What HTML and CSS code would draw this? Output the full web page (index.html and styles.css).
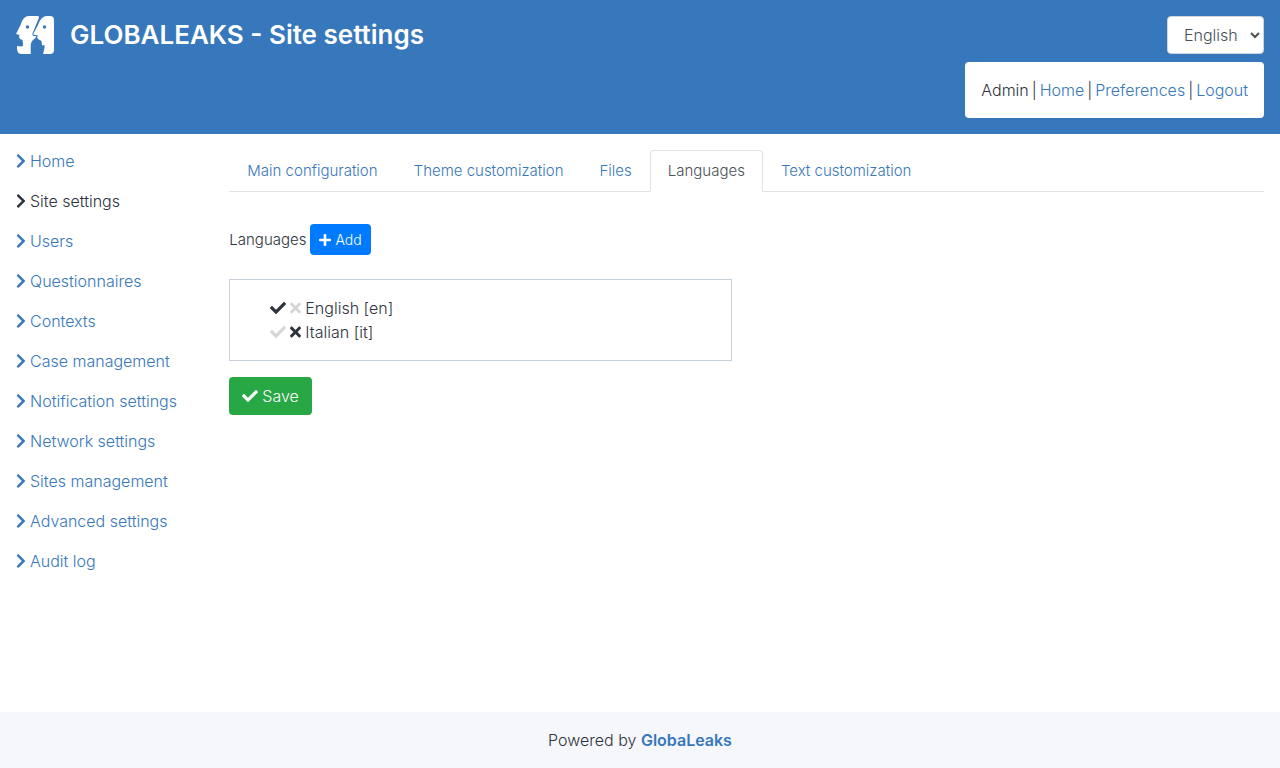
FILE: index.html
```
<!DOCTYPE html>
<html lang="en">
<head>
<meta charset="utf-8">
<title>GLOBALEAKS - Site settings</title>
<link rel="stylesheet" href="styles.css">
</head>
<body>
<svg class="sprite" aria-hidden="true">
  <symbol id="chevron" viewBox="0 0 320 512"><path d="M285.500 273 91.100 467.300c-9.400 9.400-24.600 9.400-33.900 0l-22.700-22.700c-9.400-9.400-9.400-24.500 0-33.900L188.500 256 34.500 101.300c-9.300-9.400-9.300-24.500 0-33.900l22.700-22.700c9.400-9.400 24.600-9.400 33.900 0L285.500 239c9.400 9.400 9.400 24.600 0 34z"/></symbol>
  <symbol id="check" viewBox="0 0 512 512"><path d="M173.900 439.400 7.500 273c-10-10-10-26.200 0-36.200l36.200-36.200c10-10 26.200-10 36.200 0L192 312.700 432.100 72.600c10-10 26.200-10 36.200 0l36.200 36.200c10 10 10 26.200 0 36.200L210.100 439.400c-10 10-26.200 10-36.200 0z"/></symbol>
  <symbol id="times" viewBox="0 0 352 512"><path d="M242.700 256l100.100-100.100c12.300-12.300 12.300-32.200 0-44.500l-22.200-22.200c-12.300-12.300-32.200-12.300-44.500 0L176 189.300 75.900 89.200c-12.300-12.300-32.200-12.300-44.500 0L9.200 111.500c-12.300 12.300-12.300 32.200 0 44.500L109.300 256 9.200 356.100c-12.300 12.300-12.300 32.200 0 44.500l22.200 22.200c12.300 12.300 32.200 12.300 44.500 0L176 322.700l100.100 100.100c12.300 12.300 32.200 12.300 44.500 0l22.200-22.200c12.300-12.300 12.300-32.200 0-44.500L242.700 256z"/></symbol>
  <symbol id="plus" viewBox="0 0 448 512"><path d="M416 208H272V64c0-17.700-14.300-32-32-32h-32c-17.700 0-32 14.300-32 32v144H32c-17.700 0-32 14.300-32 32v32c0 17.700 14.300 32 32 32h144v144c0 17.700 14.300 32 32 32h32c17.700 0 32-14.300 32-32V304h144c17.700 0 32-14.300 32-32v-32c0-17.700-14.300-32-32-32z"/></symbol>
</svg>

<header class="header">
  <div class="brand">
    <svg class="logo" viewBox="0 0 38 38" aria-hidden="true">
      <path class="logo-shape" d="M13 0H21.500Q23.600 0 22.800 2L16.500 17.500Q16 19.500 17.500 20H20L19.500 22L17 24Q14.700 26 14.700 29V38H6Q1 38 1 32.500V30L5.500 30.500Q7.500 30 7 27.500L6.500 24L4 23L3 21L3.500 19L0 18L4.500 9Q7 0 13 0Z"/>
      <path class="logo-shape" d="M31 0H34Q38 0 38 4V34Q38 38 34 38H27L28.500 32V29L26 29.500L25.500 25L22 23L21 21L22 19.500L17 18.500L22 9Q25 0 31 0Z"/>
      <circle class="logo-eye" cx="11.500" cy="11" r="1.700"/>
      <circle class="logo-eye" cx="28.500" cy="11" r="1.700"/>
    </svg>
    <h1 class="title">GLOBALEAKS - Site settings</h1>
  </div>
  <div class="session">
    <select class="language" aria-label="Language"><option>English</option></select>
    <div class="account">
      <span>Admin</span><span>|</span><a href="#">Home</a><span>|</span><a href="#">Preferences</a><span>|</span><a href="#">Logout</a>
    </div>
  </div>
</header>

<div class="content">
  <nav class="sidebar" aria-label="Administration">
    <a href="#"><svg class="icon chevron"><use href="#chevron"/></svg> Home</a>
    <a href="#" class="current" aria-current="page"><svg class="icon chevron"><use href="#chevron"/></svg> Site settings</a>
    <a href="#"><svg class="icon chevron"><use href="#chevron"/></svg> Users</a>
    <a href="#"><svg class="icon chevron"><use href="#chevron"/></svg> Questionnaires</a>
    <a href="#"><svg class="icon chevron"><use href="#chevron"/></svg> Contexts</a>
    <a href="#"><svg class="icon chevron"><use href="#chevron"/></svg> Case management</a>
    <a href="#"><svg class="icon chevron"><use href="#chevron"/></svg> Notification settings</a>
    <a href="#"><svg class="icon chevron"><use href="#chevron"/></svg> Network settings</a>
    <a href="#"><svg class="icon chevron"><use href="#chevron"/></svg> Sites management</a>
    <a href="#"><svg class="icon chevron"><use href="#chevron"/></svg> Advanced settings</a>
    <a href="#"><svg class="icon chevron"><use href="#chevron"/></svg> Audit log</a>
  </nav>
  <main class="main">
    <nav class="tabs" aria-label="Site settings">
      <a href="#">Main configuration</a>
      <a href="#">Theme customization</a>
      <a href="#">Files</a>
      <a href="#" class="active" aria-current="page">Languages</a>
      <a href="#">Text customization</a>
    </nav>
    <div class="add-row">
      <span>Languages</span>
      <button type="button" class="button add"><svg class="icon plus"><use href="#plus"/></svg> Add</button>
    </div>
    <ul class="languages">
      <li><svg class="icon check"><use href="#check"/></svg><svg class="icon times muted"><use href="#times"/></svg>English [en]</li>
      <li><svg class="icon check muted"><use href="#check"/></svg><svg class="icon times"><use href="#times"/></svg>Italian [it]</li>
    </ul>
    <button type="button" class="button save"><svg class="icon check"><use href="#check"/></svg> Save</button>
  </main>
</div>

<footer class="footer">Powered by&nbsp;<a href="#">GlobaLeaks</a></footer>
</body>
</html>
```

FILE: styles.css
```
* { box-sizing: border-box; }

body {
  margin: 0;
  min-height: 100vh;
  display: flex;
  flex-direction: column;
  background: #fff;
  color: #2d323d;
  font: 300 16px/24px Metropolis, Inter, sans-serif;
}

a { color: #3777bc; text-decoration: none; }

.sprite { display: none; }
.icon { height: 16px; fill: currentColor; flex: none; }
.chevron { width: 10px; }
.check { width: 16px; }
.times { width: 11px; }
.plus { width: 12px; height: 14px; }
.muted { color: #d5d6d8; }

.header {
  display: flex;
  justify-content: space-between;
  align-items: flex-start;
  padding: 16px;
  background: #3777bc;
}
.brand { display: flex; align-items: center; gap: 16px; }
.logo { width: 38px; height: 38px; }
.logo-shape { fill: #fff; }
.logo-eye { fill: #3777bc; }
.title { margin: 0; color: #fff; font-size: 26px; line-height: 38px; font-weight: 600; }

.session { display: flex; flex-direction: column; align-items: flex-end; gap: 8px; }
.language {
  height: 38px;
  padding: 6px 9px 6px 12px;
  border: 1px solid #ced4da;
  border-radius: 4px;
  background: #fff;
  color: #495057;
  font: inherit;
}
.account { display: flex; gap: 3px; padding: 16px; border-radius: 4px; background: #fff; }

.content { flex: 1; display: grid; grid-template-columns: 1fr 5fr; }
.sidebar { display: flex; flex-direction: column; padding: 7px 16px; }
.sidebar a { display: flex; align-items: center; gap: 4px; padding: 8px 0; white-space: nowrap; }
.sidebar .current { color: #2d323d; }

.main { padding: 16px; }
.tabs { display: flex; border-bottom: 1px solid #dee2e6; font-size: 15px; }
.tabs a {
  margin-bottom: -1px;
  padding: 8px 17px;
  border: 1px solid transparent;
  border-radius: 4px 4px 0 0;
}
.tabs .active { background: #fff; border-color: #dee2e6 #dee2e6 #fff; color: #495057; }

.add-row { display: flex; align-items: center; gap: 4px; margin: 32px 0 24px; font-size: 15px; }
.button {
  display: flex;
  align-items: center;
  gap: 4px;
  border: 0;
  border-radius: 4px;
  color: #fff;
  font: inherit;
}
.add { height: 31px; padding: 0 9px; background: #007bff; font-size: 14px; }
.save { height: 38px; padding: 0 13px; background: #28a745; }

.languages {
  width: calc(50% - 15px);
  min-width: 240px;
  margin: 0 0 16px;
  padding: 16px 40px;
  border: 1px solid #c8d0da;
  list-style: none;
}
.languages li { display: flex; align-items: center; gap: 4px; }

.footer { display: flex; justify-content: center; padding: 16px; background: #f5f7fb; }
.footer a { font-weight: 600; }
```
